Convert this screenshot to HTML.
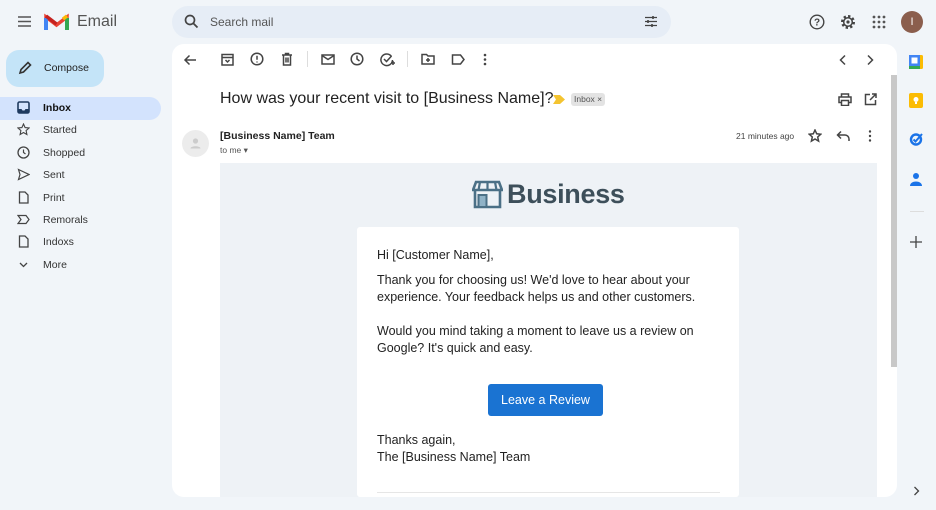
<!DOCTYPE html>
<html><head><meta charset="utf-8"><style>
*{box-sizing:border-box;margin:0;padding:0}
body{width:936px;height:510px;overflow:hidden;background:#f1f5f9;font-family:"Liberation Sans",Arial,sans-serif;color:#202124;position:relative}
.a{position:absolute}
svg{display:block}
.nav{position:absolute;left:0;width:161px;height:23px;border-radius:0 12px 12px 0;font-size:10.5px;color:#333}
.nav span{position:absolute;left:43px;top:5px}
.nav svg{position:absolute;left:17px;top:4px}
.ic{position:absolute;stroke:#444;fill:none;stroke-width:1.5}
p{font-size:12.5px;line-height:17px;color:#222}
</style></head><body>
<svg class="a" style="left:17px;top:15px" width="15" height="13"><path d="M1 2h13M1 6.5h13M1 11h13" stroke="#555" stroke-width="1.5"/></svg>
<svg class="a" style="left:44px;top:13px" width="25" height="18" viewBox="0 0 25 18"><path d="M2 17V4l10.5 8L23 4v13" fill="none" stroke="#ea4335" stroke-width="3.5"/><path d="M2 17V5" stroke="#4285f4" stroke-width="4"/><path d="M23 17V5" stroke="#34a853" stroke-width="4"/><path d="M2 3l10.5 8" stroke="#c5221f" stroke-width="3.5"/><path d="M23 3l-4 3" stroke="#fbbc04" stroke-width="3.5"/></svg>
<div class="a" style="left:77px;top:13px;font-size:16px;color:#555">Email</div>
<div class="a" style="left:172px;top:6px;width:499px;height:32px;border-radius:16px;background:#e6edf6"></div>
<svg class="a" style="left:184px;top:14px" width="15" height="15"><circle cx="6" cy="6" r="4.5" fill="none" stroke="#444" stroke-width="1.7"/><path d="M9.5 9.5l4 4" stroke="#444" stroke-width="1.8"/></svg>
<div class="a" style="left:210px;top:15px;font-size:12px;color:#555">Search mail</div>
<svg class="a" style="left:644px;top:15px" width="14" height="13"><path d="M1 2.5h12M1 6.5h12M1 10.5h12" stroke="#444" stroke-width="1.3"/><path d="M9 1v3M4 5v3M8 9v3" stroke="#444" stroke-width="1.6"/></svg>
<svg class="a" style="left:809px;top:14px" width="16" height="16"><circle cx="8" cy="8" r="6.8" fill="none" stroke="#444" stroke-width="1.4"/><text x="8" y="11.5" font-size="10" text-anchor="middle" fill="#444" font-family="Liberation Sans" font-weight="bold">?</text></svg>
<svg class="a" style="left:840px;top:14px" width="16" height="16" viewBox="0 0 16 16"><circle cx="8" cy="8" r="5.5" fill="none" stroke="#444" stroke-width="3" stroke-dasharray="2.2 2.1"/><circle cx="8" cy="8" r="4.3" fill="none" stroke="#444" stroke-width="1.5"/><circle cx="8" cy="8" r="1.6" fill="#444"/></svg>
<svg class="a" style="left:872px;top:15px" width="14" height="14"><g fill="#555"><circle cx="2" cy="2" r="1.4"/><circle cx="7" cy="2" r="1.4"/><circle cx="12" cy="2" r="1.4"/><circle cx="2" cy="7" r="1.4"/><circle cx="7" cy="7" r="1.4"/><circle cx="12" cy="7" r="1.4"/><circle cx="2" cy="12" r="1.4"/><circle cx="7" cy="12" r="1.4"/><circle cx="12" cy="12" r="1.4"/></g></svg>
<div class="a" style="left:901px;top:11px;width:22px;height:22px;border-radius:50%;background:#8b5e4d;color:#fff;font-size:11px;text-align:center;line-height:22px">I</div>
<div class="a" style="left:6px;top:50px;width:98px;height:37px;border-radius:13px;background:#c4e4f8"></div>
<svg class="a" style="left:18px;top:61px" width="14" height="14"><path d="M2 12l1-3.5L10 1.5l2.5 2.5L5.5 11z" fill="none" stroke="#333" stroke-width="1.6"/></svg>
<div class="a" style="left:44px;top:62px;font-size:10.5px;color:#222">Compose</div>
<div class="nav" style="top:97px;background:#d3e3fd;font-weight:bold;color:#111"><svg width="13" height="13"><rect x="1" y="1" width="11" height="11" rx="1.5" fill="none" stroke="#1e3a5f" stroke-width="1.6"/><path d="M1 8h3.5l1 1.5h2l1-1.5H12V12H1z" fill="#1e3a5f"/></svg><span>Inbox</span></div>
<div class="nav" style="top:119px"><svg width="13" height="13"><path d="M6.5 1l1.6 3.6 3.9.4-2.9 2.6.8 3.9-3.4-2-3.4 2 .8-3.9L1 5l3.9-.4z" fill="none" stroke="#444" stroke-width="1.1"/></svg><span>Started</span></div>
<div class="nav" style="top:142px"><svg width="13" height="13"><circle cx="6.5" cy="6.5" r="5.5" fill="none" stroke="#444" stroke-width="1.3"/><path d="M6.5 3.5v3l2 1.5" fill="none" stroke="#444" stroke-width="1.2"/></svg><span>Shopped</span></div>
<div class="nav" style="top:164px"><svg width="13" height="13"><path d="M1.5 1.5l10.5 5-10.5 5 1.5-5z" fill="none" stroke="#444" stroke-width="1.2"/></svg><span>Sent</span></div>
<div class="nav" style="top:187px"><svg width="13" height="13"><path d="M2.5 1h5.5l3 3v8h-8.5z" fill="none" stroke="#444" stroke-width="1.3"/></svg><span>Print</span></div>
<div class="nav" style="top:209px"><svg width="13" height="13"><path d="M1 2.5h8l3 4-3 4H1l3-4z" fill="none" stroke="#444" stroke-width="1.2"/></svg><span>Remorals</span></div>
<div class="nav" style="top:231px"><svg width="13" height="13"><path d="M2.5 1h5.5l3 3v8h-8.5z" fill="none" stroke="#444" stroke-width="1.3"/></svg><span>Indoxs</span></div>
<div class="nav" style="top:254px"><svg width="13" height="13"><path d="M3 5l3.5 3.5L10 5" fill="none" stroke="#444" stroke-width="1.3"/></svg><span>More</span></div>
<div class="a" style="left:172px;top:44px;width:725px;height:453px;background:#fff;border-radius:12px"></div>
<div class="a" style="left:891px;top:75px;width:6px;height:292px;background:#c8c8c8"></div>
<svg class="ic" style="left:183px;top:53px" width="14" height="14"><path d="M13 7H2M6.5 2.5L2 7l4.5 4.5"/></svg>
<svg class="ic" style="left:221px;top:53px" width="13" height="13" stroke-width="1.3"><rect x="1" y="1.5" width="11" height="10.5"/><path d="M1 4.5h11M4.5 7l2 2 2-2"/></svg>
<svg class="ic" style="left:250px;top:52px" width="14" height="14" stroke-width="1.3"><circle cx="7" cy="7" r="5.8"/><path d="M7 3.8v4M7 9.5v1"/></svg>
<svg class="ic" style="left:281px;top:52px" width="12" height="14" stroke-width="1.3"><path d="M1 3h10M4.5 3V1.5h3V3M2.5 3v10h7V3M5 5.5v5M7 5.5v5"/></svg>
<div class="a" style="left:307px;top:51px;width:1px;height:16px;background:#ddd"></div>
<svg class="ic" style="left:321px;top:54px" width="14" height="11" stroke-width="1.3"><rect x="1" y="1" width="12" height="9"/><path d="M1 1.5l6 4 6-4"/></svg>
<svg class="ic" style="left:350px;top:52px" width="14" height="14" stroke-width="1.3"><circle cx="7" cy="7" r="5.8"/><path d="M7 3.5V7l2.5 2"/></svg>
<svg class="ic" style="left:380px;top:52px" width="15" height="15" stroke-width="1.3"><path d="M11.5 4.5A5.8 5.8 0 1 0 12.5 8"/><path d="M4 7l2.5 2.5 5-5.5M11 11h4M13 9v4"/></svg>
<div class="a" style="left:407px;top:51px;width:1px;height:16px;background:#ddd"></div>
<svg class="ic" style="left:421px;top:53px" width="14" height="12" stroke-width="1.3"><path d="M1 1.5h4.5l1.5 1.5h6v8H1zM5 7h4M7 5v4"/></svg>
<svg class="ic" style="left:451px;top:54px" width="14" height="11" stroke-width="1.3"><path d="M1.5 1h8l3.5 4.5-3.5 4.5h-8z"/></svg>
<svg class="a" style="left:483px;top:53px" width="4" height="13"><g fill="#444"><circle cx="2" cy="2" r="1.3"/><circle cx="2" cy="6.5" r="1.3"/><circle cx="2" cy="11" r="1.3"/></g></svg>
<svg class="ic" style="left:838px;top:54px" width="10" height="12" stroke="#bbb"><path d="M7 1.5L2.5 6 7 10.5"/></svg>
<svg class="ic" style="left:865px;top:54px" width="10" height="12" stroke="#bbb"><path d="M3 1.5L7.5 6 3 10.5"/></svg>
<div class="a" style="left:220px;top:90px;font-size:16px;color:#222">How was your recent visit to [Business Name]?</div>
<svg class="a" style="left:553px;top:95px" width="12" height="9"><path d="M0 0h7l5 4.5L7 9H0l3-4.5z" fill="#f4c430"/></svg>
<div class="a" style="left:571px;top:93px;height:13px;padding:0 3px;background:#e3e3e3;border-radius:3px;font-size:8.5px;color:#555;line-height:13px">Inbox ×</div>
<svg class="ic" style="left:838px;top:93px" width="14" height="13" stroke-width="1.3"><path d="M3.5 4V1h7v3M3.5 9.5H1v-5.5h12v5.5h-2.5M3.5 7.5h7v5h-7z"/></svg>
<svg class="ic" style="left:864px;top:93px" width="13" height="13" stroke-width="1.3"><path d="M6 1.5H1.5v10h10V7M8 1h4v4M12 1L6 7"/></svg>
<div class="a" style="left:182px;top:130px;width:27px;height:27px;border-radius:50%;background:#ececec"></div>
<svg class="a" style="left:189px;top:137px" width="13" height="13"><circle cx="6.5" cy="4" r="2.6" fill="#ccc"/><path d="M1.5 11.5c0-3 10-3 10 0z" fill="#ccc"/></svg>
<div class="a" style="left:220px;top:130px;font-size:10.5px;font-weight:bold;color:#222">[Business Name] Team</div>
<div class="a" style="left:220px;top:145px;font-size:8.5px;color:#555">to me ▾</div>
<div class="a" style="left:736px;top:131px;font-size:8.5px;color:#444">21 minutes ago</div>
<svg class="ic" style="left:808px;top:129px" width="14" height="14" stroke-width="1.2"><path d="M7 1l1.7 3.8 4.1.4-3.1 2.8.9 4.1L7 10 3.4 12.1l.9-4.1L1.2 5.2l4.1-.4z"/></svg>
<svg class="ic" style="left:836px;top:130px" width="14" height="12" stroke-width="1.3"><path d="M5 1.5L1.5 5 5 8.5M1.5 5H9a4 4 0 0 1 4 4v2"/></svg>
<svg class="a" style="left:868px;top:130px" width="4" height="12"><g fill="#444"><circle cx="2" cy="1.5" r="1.2"/><circle cx="2" cy="6" r="1.2"/><circle cx="2" cy="10.5" r="1.2"/></g></svg>
<div class="a" style="left:220px;top:163px;width:657px;height:334px;background:#eef2f6"></div>
<svg class="a" style="left:472px;top:180px" width="31" height="29" viewBox="0 0 31 29"><path d="M4 2h23l3 8H1z" fill="none" stroke="#4b7086" stroke-width="2.6"/><path d="M8 2l-1.5 8M15.5 2v8M23 2l1.5 8" stroke="#4b7086" stroke-width="2.2"/><path d="M3 10v17h25V10" fill="none" stroke="#4b7086" stroke-width="2.6"/><rect x="6.5" y="15" width="8" height="12" fill="#8fb2c6" stroke="#4b7086" stroke-width="2"/></svg>
<div class="a" style="left:507px;top:179px;font-size:27px;font-weight:bold;color:#3d4f5a;letter-spacing:-0.3px">Business</div>
<div class="a" style="left:357px;top:227px;width:382px;height:270px;background:#fff;border-radius:3px"></div>
<div class="a" style="left:377px;top:247px;width:350px">
<p>Hi [Customer Name],</p>
<p style="margin-top:8px">Thank you for choosing us! We'd love to hear about your experience. Your feedback helps us and other customers.</p>
<p style="margin-top:17px">Would you mind taking a moment to leave us a review on Google? It's quick and easy.</p>
</div>
<div class="a" style="left:488px;top:384px;width:115px;height:32px;background:#1a73d2;border-radius:3px;color:#fff;font-size:12.5px;text-align:center;line-height:32px">Leave a Review</div>
<div class="a" style="left:377px;top:432px"><p>Thanks again,</p><p>The [Business Name] Team</p></div>
<div class="a" style="left:377px;top:492px;width:343px;height:1px;background:#e6e6e6"></div>
<svg class="a" style="left:909px;top:55px" width="14" height="14"><rect x="0" y="0" width="14" height="14" rx="1.5" fill="#fbbc04"/><rect x="0" y="0" width="11" height="11" fill="#4285f4"/><rect x="0" y="11" width="11" height="3" fill="#34a853"/><rect x="2.5" y="2.5" width="6" height="6" fill="#fff"/></svg>
<svg class="a" style="left:909px;top:93px" width="14" height="15"><rect x="0" y="0" width="14" height="15" rx="2" fill="#fbbc04"/><circle cx="7" cy="6.5" r="2.5" fill="#fff"/><rect x="6" y="9" width="2" height="2" fill="#fff"/></svg>
<svg class="a" style="left:909px;top:132px" width="14" height="14"><circle cx="7" cy="7.5" r="5" fill="none" stroke="#1a73e8" stroke-width="2.4"/><path d="M4.5 7.5l2 2L13 2" fill="none" stroke="#1a73e8" stroke-width="2"/></svg>
<svg class="a" style="left:910px;top:172px" width="12" height="14"><circle cx="6" cy="4" r="3" fill="#1a73e8"/><path d="M0 14c0-6 12-6 12 0z" fill="#1a73e8"/></svg>
<div class="a" style="left:910px;top:211px;width:14px;height:1px;background:#ddd"></div>
<svg class="a" style="left:910px;top:236px" width="12" height="12"><path d="M6 0v12M0 6h12" stroke="#444" stroke-width="1.3"/></svg>
<svg class="a" style="left:913px;top:486px" width="7" height="10"><path d="M1.5 1l4 4-4 4" fill="none" stroke="#444" stroke-width="1.3"/></svg>
</body></html>
